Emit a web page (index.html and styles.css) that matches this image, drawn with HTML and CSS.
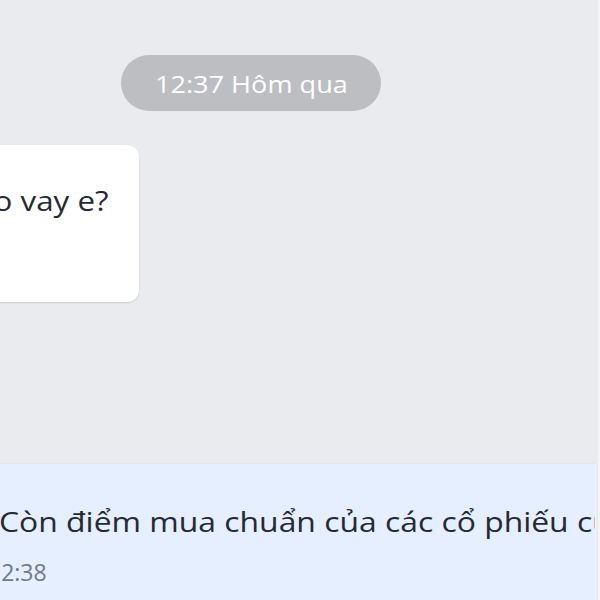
FILE: index.html
```html
<!DOCTYPE html>
<html lang="vi">
<head>
<meta charset="utf-8">
<title>Chat</title>
<link rel="stylesheet" href="styles.css">
</head>
<body>
<div class="screen">
  <div class="chat">
    <div class="time-row"><span class="time-pill"><span class="pill-text">12:37 Hôm qua</span></span></div>
    <div class="msg-in">
      <div class="bubble-in"><p class="bubble-text">Sao vay e?</p></div>
    </div>
  </div>
  <div class="msg-out">
    <p class="out-text">Còn điểm mua chuẩn của các cổ phiếu cũ không anh?</p>
    <p class="out-time">12:38</p>
  </div>
</div>
</body>
</html>
```
FILE: styles.css
```css
html, body {
  margin: 0;
  padding: 0;
}
body {
  width: 600px;
  height: 600px;
  overflow: hidden;
  background: #eaebef;
  font-family: "Open Sans", "Noto Sans", sans-serif;
}
.screen {
  width: 600px;
  height: 600px;
  display: flex;
  flex-direction: column;
  overflow: hidden;
  box-sizing: border-box;
  border-right: 2px solid #f4f5f8;
}
.chat {
  height: 463px;
  display: flex;
  flex-direction: column;
}
.time-row {
  padding-top: 55px;
  padding-left: 121px;
  display: flex;
}
.time-pill {
  width: 260px;
  height: 56px;
  border-radius: 28px;
  background: #bdbec2;
  color: #ffffff;
  font-size: 24px;
  font-weight: 500;
  display: flex;
  align-items: center;
  justify-content: center;
}
.pill-text {
  display: inline-block;
  transform: scaleX(1.13);
}
.msg-in {
  margin-top: 34px;
  display: flex;
}
.bubble-in {
  margin-left: -63px;
  width: 202px;
  height: 157px;
  background: #ffffff;
  border-radius: 12px;
  box-shadow: 0 1px 2px rgba(0, 0, 0, 0.12);
  box-sizing: border-box;
  padding: 38px 0 0 22px;
}
.bubble-text {
  margin: 0;
  font-size: 27px;
  line-height: 36px;
  color: #252a31;
  white-space: nowrap;
  transform: scaleX(1.16);
  transform-origin: left center;
}
.msg-out {
  flex: 1;
  background: #e5efff;
  border-top: 1px solid #dfe6f1;
  border-right: 1px solid #f3f7fd;
  margin-right: 2px;
  padding-top: 39px;
  overflow: hidden;
}
.out-text {
  margin: 0 0 0 -1px;
  font-size: 27px;
  line-height: 38px;
  color: #252a31;
  white-space: nowrap;
  transform: scaleX(1.18);
  transform-origin: left center;
}
.out-time {
  margin: 17px 0 0 -12px;
  font-size: 23px;
  line-height: 28px;
  color: #6f7a88;
}
```
